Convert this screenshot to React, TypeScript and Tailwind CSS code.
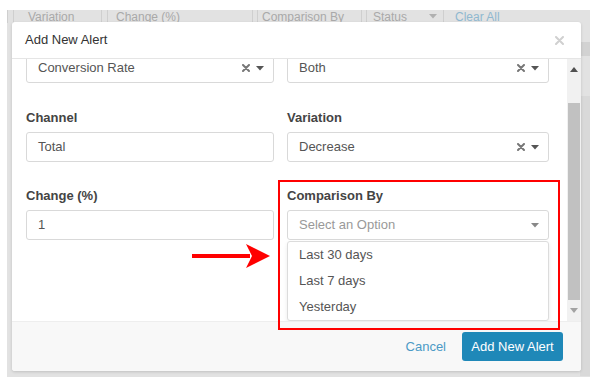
import React from "react";

const Caret = ({ color = "#555" }: { color?: string }) => (
  <svg width="8" height="5" viewBox="0 0 8 5" className="shrink-0">
    <path d="M0 0 L8 0 L4 4.5 Z" fill={color} />
  </svg>
);

const Clear = () => (
  <svg width="8" height="8" viewBox="0 0 8 8" className="shrink-0">
    <path d="M1 1 L7 7 M7 1 L1 7" stroke="#777" strokeWidth="2" strokeLinecap="round" />
  </svg>
);

const Select = ({ value, clear = true, placeholder = false }: { value: string; clear?: boolean; placeholder?: boolean }) => (
  <div className="flex h-[30px] items-center rounded-[3px] border border-[#d9d9d9] bg-white pl-[11px] pr-[9px]">
    <span className={`flex-1 text-[13px] ${placeholder ? "text-[#999]" : "text-[#555]"}`}>{value}</span>
    <div className="flex items-center gap-[6px]">
      {clear && <Clear />}
      <Caret color={placeholder ? "#888" : "#555"} />
    </div>
  </div>
);

const Input = ({ value }: { value: string }) => (
  <div className="flex h-[30px] items-center rounded-[3px] border border-[#d9d9d9] bg-white pl-[11px]">
    <span className="text-[13px] text-[#555]">{value}</span>
  </div>
);

const Label = ({ children }: { children: React.ReactNode }) => (
  <div className="h-[16px] text-[13px] font-bold leading-[16px] text-[#444]">{children}</div>
);

export default function App() {
  return (
    <div className="relative h-[384px] w-[601px] overflow-hidden bg-white" style={{ fontFamily: '"Liberation Sans", Arial, sans-serif' }}>
      {/* backdrop page */}
      <div className="absolute left-[7px] top-[10px] h-[367px] w-[583px] bg-[#e2e2e2]">
        <div className="flex h-[13px] items-center text-[12px] leading-none text-[#a9a9a9]">
          <div className="ml-[0px] h-[13px] w-[1px] bg-[#cfcfcf]" />
          <div className="ml-[5px] h-[13px] w-[1px] bg-[#cfcfcf]" />
          <span className="ml-[14px] w-[73px]">Variation</span>
          <div className="h-[13px] w-[1px] bg-[#cfcfcf]" />
          <div className="ml-[5px] h-[13px] w-[1px] bg-[#cfcfcf]" />
          <span className="ml-[8px] w-[136px]">Change (%)</span>
          <div className="h-[13px] w-[1px] bg-[#cfcfcf]" />
          <div className="ml-[4px] h-[13px] w-[1px] bg-[#cfcfcf]" />
          <span className="ml-[4px] w-[99px]">Comparison By</span>
          <div className="h-[13px] w-[1px] bg-[#cfcfcf]" />
          <div className="ml-[4px] h-[13px] w-[1px] bg-[#cfcfcf]" />
          <span className="ml-[6px] w-[56px]">Status</span>
          <Caret color="#b0b0b0" />
          <div className="ml-[6px] h-[13px] w-[1px] bg-[#cfcfcf]" />
          <span className="ml-[11px] text-[#8fb8d0]">Clear All</span>
        </div>
        <div className="absolute right-0 top-[32px] h-[14px] w-[10px] bg-[#d2d2d2]" />
        <div className="absolute right-0 top-[86px] h-[280px] w-[10px] bg-[#d9d9d9]" />
      </div>

      {/* modal */}
      <div className="absolute left-[12px] top-[22px] flex h-[349px] w-[569px] flex-col overflow-hidden rounded-[3px] bg-white shadow-[0_1px_3px_rgba(0,0,0,0.15)]">
        <div className="flex h-[37px] shrink-0 items-center justify-between border-b border-[#e5e5e5] pl-[13px] pr-[17px]">
          <span className="text-[13px] text-[#333]">Add New Alert</span>
          <svg width="9" height="9" viewBox="0 0 9 9">
            <path d="M1 1 L8 8 M8 1 L1 8" stroke="#d0d0d0" strokeWidth="2" strokeLinecap="round" />
          </svg>
        </div>

        <div className="flex h-[262px] shrink-0">
          <div className="relative flex-1 overflow-hidden">
            <div className="-mt-[6px] flex flex-col pl-[14px]">
              <div className="flex gap-[13px]">
                <div className="w-[248px]"><Select value="Conversion Rate" /></div>
                <div className="w-[262px]"><Select value="Both" /></div>
              </div>
              <div className="mt-[27px] flex gap-[13px]">
                <div className="flex w-[248px] flex-col gap-[6px]">
                  <Label>Channel</Label>
                  <Input value="Total" />
                </div>
                <div className="flex w-[262px] flex-col gap-[6px]">
                  <Label>Variation</Label>
                  <Select value="Decrease" />
                </div>
              </div>
              <div className="mt-[26px] flex gap-[13px]">
                <div className="flex w-[248px] flex-col gap-[6px]">
                  <Label>Change (%)</Label>
                  <Input value="1" />
                </div>
                <div className="flex w-[262px] flex-col gap-[6px]">
                  <Label>Comparison By</Label>
                  <Select value="Select an Option" clear={false} placeholder />
                  <div className="-mt-[5px] flex flex-col rounded-[3px] border border-[#dcdcdc] bg-white shadow-[0_2px_4px_rgba(0,0,0,0.08)]">
                    {["Last 30 days", "Last 7 days", "Yesterday"].map((t) => (
                      <div key={t} className="flex h-[26px] items-center pl-[11px] text-[13px] text-[#555]">{t}</div>
                    ))}
                  </div>
                </div>
              </div>
            </div>
          </div>
          {/* scrollbar */}
          <div className="flex w-[14px] flex-col items-center bg-[#f1f1f1]">
            <div className="flex h-[20px] items-center">
              <svg width="8" height="5" viewBox="0 0 8 5"><path d="M0 5 L8 5 L4 0 Z" fill="#505050" /></svg>
            </div>
            <div className="mt-[24px] h-[197px] w-[12px] bg-[#c1c1c1]" />
            <div className="flex flex-1 items-center">
              <svg width="8" height="5" viewBox="0 0 8 5"><path d="M0 0 L8 0 L4 5 Z" fill="#a3a3a3" /></svg>
            </div>
          </div>
        </div>

        <div className="flex flex-1 items-center justify-end gap-[16px] border-t border-[#eee] bg-[#f8f8f8] pr-[18px]">
          <span className="text-[13px] text-[#4b9ac6]">Cancel</span>
          <div className="flex h-[29px] w-[101px] items-center justify-center rounded-[3px] bg-[#1f88b8] text-[13px] text-white">
            Add New Alert
          </div>
        </div>
      </div>

      {/* annotation */}
      <div className="absolute left-[278px] top-[180px] h-[150px] w-[282px] border-2 border-[#ff0000]" />
      <svg className="absolute left-[190px] top-[242px]" width="82" height="28" viewBox="0 0 82 28">
        <rect x="2" y="12" width="58" height="4" fill="#ff0000" />
        <path d="M56 2 L80 14 L56 26 L62 14 Z" fill="#ff0000" />
      </svg>
    </div>
  );
}
